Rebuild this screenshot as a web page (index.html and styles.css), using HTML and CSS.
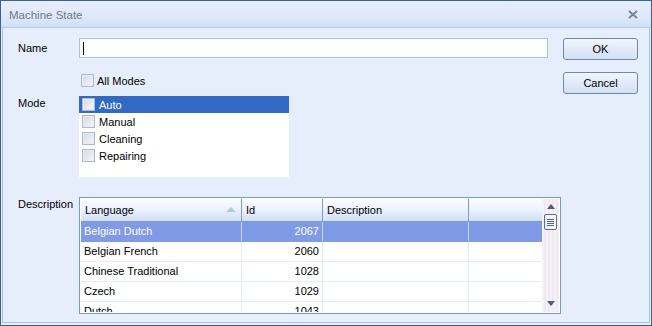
FILE: index.html
```html
<!DOCTYPE html>
<html lang="en">
<head>
    <meta charset="UTF-8">
    <title>Machine State</title>
    <link rel="stylesheet" href="styles.css">
</head>
<body>
    <div class="window">
        <!-- Title bar -->
        <div class="titlebar">
            <span class="title">Machine State</span>
            <svg class="close" width="10" height="9" viewBox="0 0 10 9">
                <path d="M1 1 L9 8 M9 1 L1 8" stroke="#7c8698" stroke-width="2"/>
            </svg>
        </div>

        <div class="frame">
            <div class="form">
                <div class="row name-row">
                    <label class="label">Name</label>
                    <div class="textbox"><span class="caret"></span></div>
                </div>

                <div class="row all-row">
                    <span class="label"></span>
                    <span class="check"></span>
                    <span class="all-text">All Modes</span>
                </div>

                <div class="row mode-row">
                    <label class="label">Mode</label>
                    <div class="listbox">
                        <div class="item selected"><span class="check"></span>Auto</div>
                        <div class="item"><span class="check"></span>Manual</div>
                        <div class="item"><span class="check"></span>Cleaning</div>
                        <div class="item"><span class="check"></span>Repairing</div>
                    </div>
                </div>

                <div class="row desc-row">
                    <label class="label">Description</label>
                    <div class="grid">
                        <div class="grid-body">
                            <div class="table">
                                <div class="header">
                                    <div class="cell c-lang">Language<span class="sort"></span></div>
                                    <div class="cell c-id">Id</div>
                                    <div class="cell c-desc">Description</div>
                                    <div class="cell c-fill"></div>
                                </div>
                                <div class="trow selected">
                                    <div class="cell c-lang">Belgian Dutch</div>
                                    <div class="cell c-id num">2067</div>
                                    <div class="cell c-desc"></div>
                                    <div class="cell c-fill"></div>
                                </div>
                                <div class="trow">
                                    <div class="cell c-lang">Belgian French</div>
                                    <div class="cell c-id num">2060</div>
                                    <div class="cell c-desc"></div>
                                    <div class="cell c-fill"></div>
                                </div>
                                <div class="trow">
                                    <div class="cell c-lang">Chinese Traditional</div>
                                    <div class="cell c-id num">1028</div>
                                    <div class="cell c-desc"></div>
                                    <div class="cell c-fill"></div>
                                </div>
                                <div class="trow">
                                    <div class="cell c-lang">Czech</div>
                                    <div class="cell c-id num">1029</div>
                                    <div class="cell c-desc"></div>
                                    <div class="cell c-fill"></div>
                                </div>
                                <div class="trow">
                                    <div class="cell c-lang">Dutch</div>
                                    <div class="cell c-id num">1043</div>
                                    <div class="cell c-desc"></div>
                                    <div class="cell c-fill"></div>
                                </div>
                            </div>
                            <!-- Scrollbar -->
                            <div class="scrollbar">
                                <span class="arrow up"></span>
                                <span class="thumb">
                                    <i></i><i></i><i></i><i></i>
                                </span>
                                <span class="track"></span>
                                <span class="arrow down"></span>
                            </div>
                        </div>
                    </div>
                </div>
            </div>

            <div class="buttons">
                <button class="btn">OK</button>
                <button class="btn">Cancel</button>
            </div>
        </div>
    </div>
</body>
</html>
```

FILE: styles.css
```css
body {
    margin: 0;
    padding: 0;
    font-family: "Liberation Sans", Arial, sans-serif;
    font-size: 11px;
    color: #000;
    background: #e6eefc;
}

/* Window */
.window {
    width: 652px;
    height: 326px;
    box-sizing: border-box;
    border: 1px solid #3f5f8c;
    background: #e6eefc;
    display: flex;
    flex-direction: column;
}

.titlebar {
    height: 26px;
    display: flex;
    align-items: center;
    justify-content: space-between;
    padding: 0 13px 0 8px;
    background: linear-gradient(#e6eefb, #dde8f8 60%, #cfe0f6);
    border-bottom: 1px solid #b4cdf0;
}

.title {
    font-size: 11.5px;
    color: #6f7a8b;
    margin-top: 1px;
}

.close {
    margin-top: 1px;
}

.frame {
    flex: 1;
    margin: 0 1px 2px 1px;
    border: 1px solid #a9c4ec;
    border-top: none;
    display: flex;
    padding: 10px 0 0 15px;
}

/* Form column */
.form {
    width: 543px;
    display: flex;
    flex-direction: column;
}

.row {
    display: flex;
}

.label {
    width: 61px;
    flex: none;
}

.name-row {
    align-items: center;
    height: 20px;
}

.textbox {
    width: 467px;
    height: 18px;
    background: #fff;
    border: 1px solid #a9c3e6;
    display: flex;
    align-items: center;
}

.caret {
    width: 1px;
    height: 13px;
    background: #000;
    margin-left: 3px;
}

.check {
    width: 11px;
    height: 11px;
    flex: none;
    border: 1px solid #a7bad6;
    background: linear-gradient(135deg, #d3d8e0, #f7f8fa);
    box-shadow: inset 0 0 0 1px #e9edf3;
}

.all-row {
    margin-top: 16px;
    align-items: center;
    height: 13px;
}

.all-row .check {
    margin-left: 2px;
}

.all-text {
    margin-left: 3px;
}

.mode-row {
    margin-top: 9px;
}

.mode-row .label {
    padding-top: 1px;
}

.listbox {
    width: 210px;
    height: 81px;
    background: #fff;
}

.item {
    height: 17px;
    display: flex;
    align-items: center;
    padding-left: 3px;
}

.item .check {
    margin-right: 4px;
}

.item.selected {
    background: #316ac5;
    color: #fff;
}

.desc-row {
    margin-top: 20px;
}

.desc-row .label {
    padding-top: 1px;
}

/* Data grid */
.grid {
    width: 480px;
    height: 115px;
    border: 1px solid #7599d4;
    background: #fff;
    overflow: hidden;
}

.grid-body {
    display: flex;
    margin: 1px;
    height: 113px;
}

.table {
    width: 462px;
    overflow: hidden;
}

.header {
    display: flex;
    height: 22px;
    background: linear-gradient(#fbfdff, #eaf2fd 50%, #cfe0f7);
    border-bottom: 1px solid #7b9bd3;
}

.header .cell {
    border-right: 1px solid #7b9bd3;
    line-height: 22px;
    padding-left: 4px;
    position: relative;
}

.header .cell:last-child {
    border-right: none;
}

.sort {
    position: absolute;
    right: 5px;
    top: 8px;
    width: 0;
    height: 0;
    border-left: 5px solid transparent;
    border-right: 5px solid transparent;
    border-bottom: 5px solid #a9ccf1;
}

.cell {
    box-sizing: border-box;
    flex: none;
    white-space: nowrap;
}

.c-lang { width: 161px; }
.c-id { width: 81px; }
.c-desc { width: 146px; }
.c-fill { width: 74px; }

.trow {
    display: flex;
    height: 19px;
    border-bottom: 1px solid #e4edf9;
}

.trow .cell {
    height: 19px;
    line-height: 19px;
    border-right: 1px solid #e4edf9;
    padding: 0 3px;
}

.trow .cell:last-child {
    border-right: none;
}

.num {
    text-align: right;
}

.trow.selected {
    background: #7f9ae6;
    color: #fff;
    border-bottom-color: #7f9ae6;
}

.trow.selected .cell {
    border-right-color: #c9d6f4;
}

/* Scrollbar */
.scrollbar {
    width: 17px;
    display: flex;
    flex-direction: column;
    align-items: center;
    background: repeating-linear-gradient(90deg, #f6f1f7 0 2px, #efe9f3 2px 4px);
}

.arrow {
    width: 0;
    height: 0;
    border-left: 4px solid transparent;
    border-right: 4px solid transparent;
}

.arrow.up {
    margin-top: 5px;
    border-bottom: 5px solid #4f5c7c;
}

.arrow.down {
    margin-bottom: 6px;
    border-top: 5px solid #4f5c7c;
}

.thumb {
    margin-top: 5px;
    width: 11px;
    height: 14px;
    border: 1px solid #5d6d90;
    border-radius: 2px;
    background: linear-gradient(90deg, #e9eef8, #fdfdff);
    display: flex;
    flex-direction: column;
    justify-content: center;
    align-items: center;
    gap: 1px;
}

.thumb i {
    display: block;
    width: 7px;
    height: 1px;
    background: #55627f;
}

.track {
    flex: 1;
}

/* Buttons */
.buttons {
    display: flex;
    flex-direction: column;
    gap: 12px;
    margin-left: 2px;
}

.btn {
    width: 75px;
    height: 22px;
    font-family: "Liberation Sans", Arial, sans-serif;
    font-size: 11px;
    color: #000;
    border: 1px solid #7088ad;
    border-radius: 3px;
    background: linear-gradient(#f1f6fd, #e0eaf8 50%, #d3e1f4);
    padding: 0;
}
```
